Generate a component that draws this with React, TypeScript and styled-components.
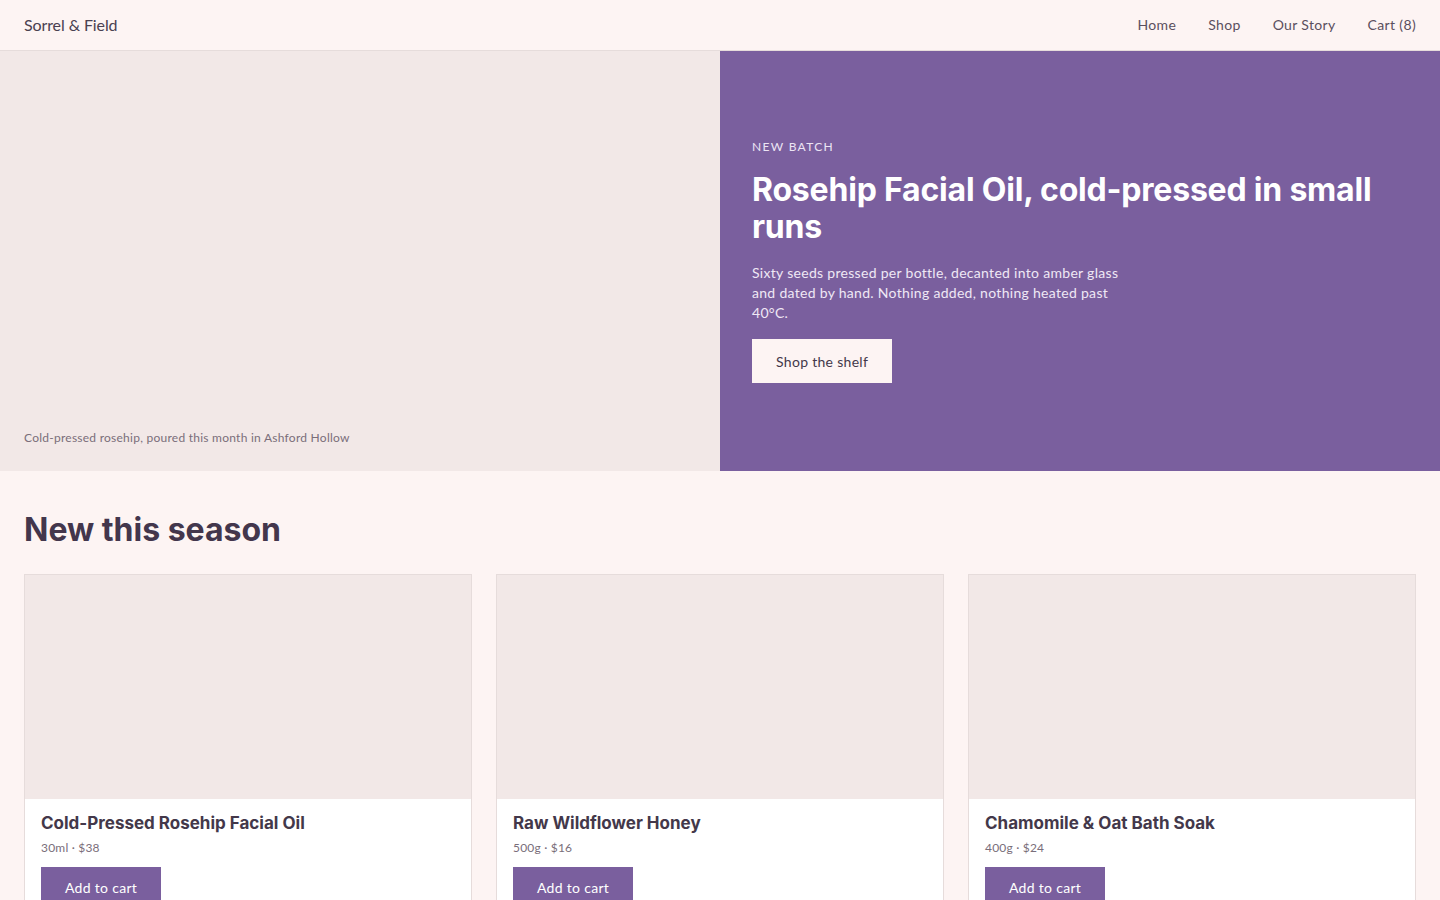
import React from "react";
import styled, { createGlobalStyle } from "styled-components";

const GlobalStyle = createGlobalStyle`
  * {
    box-sizing: border-box;
  }
  body {
    margin: 0;
    background: #fdf4f3;
    color: #43384a;
    font-family: "Lato", "Noto Sans", sans-serif;
  }
`;

const Header = styled.header`
  height: 51px;
  display: flex;
  align-items: center;
  justify-content: space-between;
  padding: 0 24px 1px;
  background: #fdf4f3;
  border-bottom: 1px solid #e6dcdb;
`;

const Logo = styled.div`
  font-size: 16px;
  color: #4a4050;
  letter-spacing: -0.1px;
`;

const Nav = styled.nav`
  display: flex;
  gap: 32px;
`;

const NavLink = styled.a`
  font-size: 14px;
  color: #5a4f5e;
  letter-spacing: 0.35px;
  text-decoration: none;
`;

const Hero = styled.section`
  display: grid;
  grid-template-columns: 1fr 1fr;
  height: 420px;
`;

const HeroImage = styled.div`
  background: #f2e8e7;
  display: flex;
  align-items: flex-end;
  padding: 0 24px 26px;
`;

const Caption = styled.p`
  margin: 0;
  font-size: 12px;
  letter-spacing: 0.25px;
  color: #7a6e7a;
`;

const HeroCopy = styled.div`
  background: #7a5f9e;
  color: #fff;
  display: flex;
  flex-direction: column;
  justify-content: center;
  padding: 0 32px;
`;

const Eyebrow = styled.div`
  font-size: 12px;
  letter-spacing: 1.3px;
  text-transform: uppercase;
  color: #ece4f4;
  margin-bottom: 17px;
`;

const HeroTitle = styled.h1`
  margin: 0 0 18px;
  font-family: "Inter", "Noto Sans", sans-serif;
  font-size: 32px;
  font-weight: 700;
  line-height: 37px;
  letter-spacing: -0.2px;
`;

const HeroText = styled.p`
  margin: 0 0 16px;
  max-width: 372px;
  font-size: 14px;
  line-height: 20px;
  letter-spacing: 0.3px;
  color: #efe8f5;
`;

const Button = styled.button<{ $light?: boolean }>`
  align-self: flex-start;
  height: ${(p) => (p.$light ? "44px" : "40px")};
  padding: 0 24px;
  border: none;
  border-radius: 0;
  background: ${(p) => (p.$light ? "#fdf4f3" : "#7a5f9e")};
  color: ${(p) => (p.$light ? "#43384a" : "#ffffff")};
  font-family: "Lato", "Noto Sans", sans-serif;
  font-size: 14px;
  letter-spacing: 0.3px;
  cursor: pointer;
`;

const Section = styled.section`
  padding: 39px 24px 0;
`;

const SectionTitle = styled.h2`
  margin: 0 0 24px;
  font-family: "Inter", "Noto Sans", sans-serif;
  font-size: 32px;
  font-weight: 700;
  line-height: 40px;
  color: #43364c;
  letter-spacing: 0;
`;

const Grid = styled.div`
  display: grid;
  grid-template-columns: repeat(3, 1fr);
  gap: 24px;
`;

const Card = styled.article`
  border: 1px solid #e6dcdb;
  background: #fff;
`;

const CardImage = styled.div`
  height: 224px;
  background: #f2e8e7;
`;

const CardBody = styled.div`
  padding: 12px 16px 16px;
  display: flex;
  flex-direction: column;
`;

const CardTitle = styled.h3`
  margin: 0 0 5px;
  font-family: "Inter", "Noto Sans", sans-serif;
  font-size: 17px;
  font-weight: 700;
  line-height: 24px;
  color: #43384a;
`;

const Meta = styled.div`
  font-size: 12px;
  letter-spacing: 0.2px;
  color: #7a6e7a;
  margin-bottom: 12px;
`;

const products = [
  { name: "Cold-Pressed Rosehip Facial Oil", meta: "30ml · $38" },
  { name: "Raw Wildflower Honey", meta: "500g · $16" },
  { name: "Chamomile & Oat Bath Soak", meta: "400g · $24" },
];

export default function App() {
  return (
    <>
      <GlobalStyle />
      <Header>
        <Logo>Sorrel &amp; Field</Logo>
        <Nav>
          <NavLink href="#">Home</NavLink>
          <NavLink href="#">Shop</NavLink>
          <NavLink href="#">Our Story</NavLink>
          <NavLink href="#">Cart (8)</NavLink>
        </Nav>
      </Header>
      <Hero>
        <HeroImage>
          <Caption>Cold-pressed rosehip, poured this month in Ashford Hollow</Caption>
        </HeroImage>
        <HeroCopy>
          <Eyebrow>New batch</Eyebrow>
          <HeroTitle>Rosehip Facial Oil, cold-pressed in small runs</HeroTitle>
          <HeroText>
            Sixty seeds pressed per bottle, decanted into amber glass and dated
            by hand. Nothing added, nothing heated past 40°C.
          </HeroText>
          <Button $light>Shop the shelf</Button>
        </HeroCopy>
      </Hero>
      <Section>
        <SectionTitle>New this season</SectionTitle>
        <Grid>
          {products.map((p) => (
            <Card key={p.name}>
              <CardImage />
              <CardBody>
                <CardTitle>{p.name}</CardTitle>
                <Meta>{p.meta}</Meta>
                <Button>Add to cart</Button>
              </CardBody>
            </Card>
          ))}
        </Grid>
      </Section>
    </>
  );
}
